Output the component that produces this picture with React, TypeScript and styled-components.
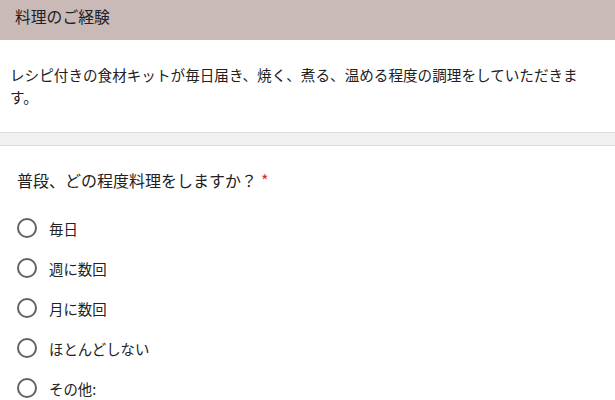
import React from "react";
import styled, { createGlobalStyle } from "styled-components";

const GlobalStyle = createGlobalStyle`
  html, body {
    margin: 0;
    padding: 0;
    background: #ffffff;
  }
  body {
    font-family: "Noto Sans CJK JP", "Noto Sans", sans-serif;
    color: #202124;
  }
`;

const options = ["毎日", "週に数回", "月に数回", "ほとんどしない", "その他:"];

const Page = styled.div`
  width: 615px;
  height: 400px;
  overflow: hidden;
  display: flex;
  flex-direction: column;
`;

const SectionHeader = styled.div`
  height: 40px;
  flex-shrink: 0;
  background: #c9b9b7;
  display: flex;
  align-items: center;
  padding: 0 15px 8px;
  box-sizing: border-box;
  font-size: 15.8px;
  color: #202124;
`;

const Description = styled.div`
  padding: 24px 30px 24px 10px;
  font-size: 14.6px;
  line-height: 22px;
  color: #202124;
`;

const Divider = styled.div`
  height: 12px;
  flex-shrink: 0;
  background: #f1f0f0;
  border-top: 1px solid #dadce0;
  border-bottom: 1px solid #dadce0;
`;

const Question = styled.div`
  padding: 22px 17px 0;
  display: flex;
  flex-direction: column;
`;

const Title = styled.div`
  font-size: 16px;
  line-height: 24px;
  color: #202124;
  margin-bottom: 24px;
`;

const Required = styled.span`
  color: #d93025;
  margin-left: 4px;
`;

const Options = styled.div`
  display: flex;
  flex-direction: column;
  gap: 16px;
`;

const Option = styled.label`
  display: flex;
  align-items: center;
  gap: 12px;
  height: 24px;
  font-size: 14.4px;
  color: #202124;
`;

const Radio = styled.span`
  width: 20px;
  height: 20px;
  box-sizing: border-box;
  border: 2px solid #5f6368;
  border-radius: 50%;
  flex-shrink: 0;
`;

export default function App() {
  return (
    <>
      <GlobalStyle />
      <Page>
        <SectionHeader>料理のご経験</SectionHeader>
        <Description>
          レシピ付きの食材キットが毎日届き、焼く、煮る、温める程度の調理をしていただきます。
        </Description>
        <Divider />
        <Question>
          <Title>
            普段、どの程度料理をしますか？<Required>*</Required>
          </Title>
          <Options>
            {options.map((o) => (
              <Option key={o}>
                <Radio />
                {o}
              </Option>
            ))}
          </Options>
        </Question>
      </Page>
    </>
  );
}
